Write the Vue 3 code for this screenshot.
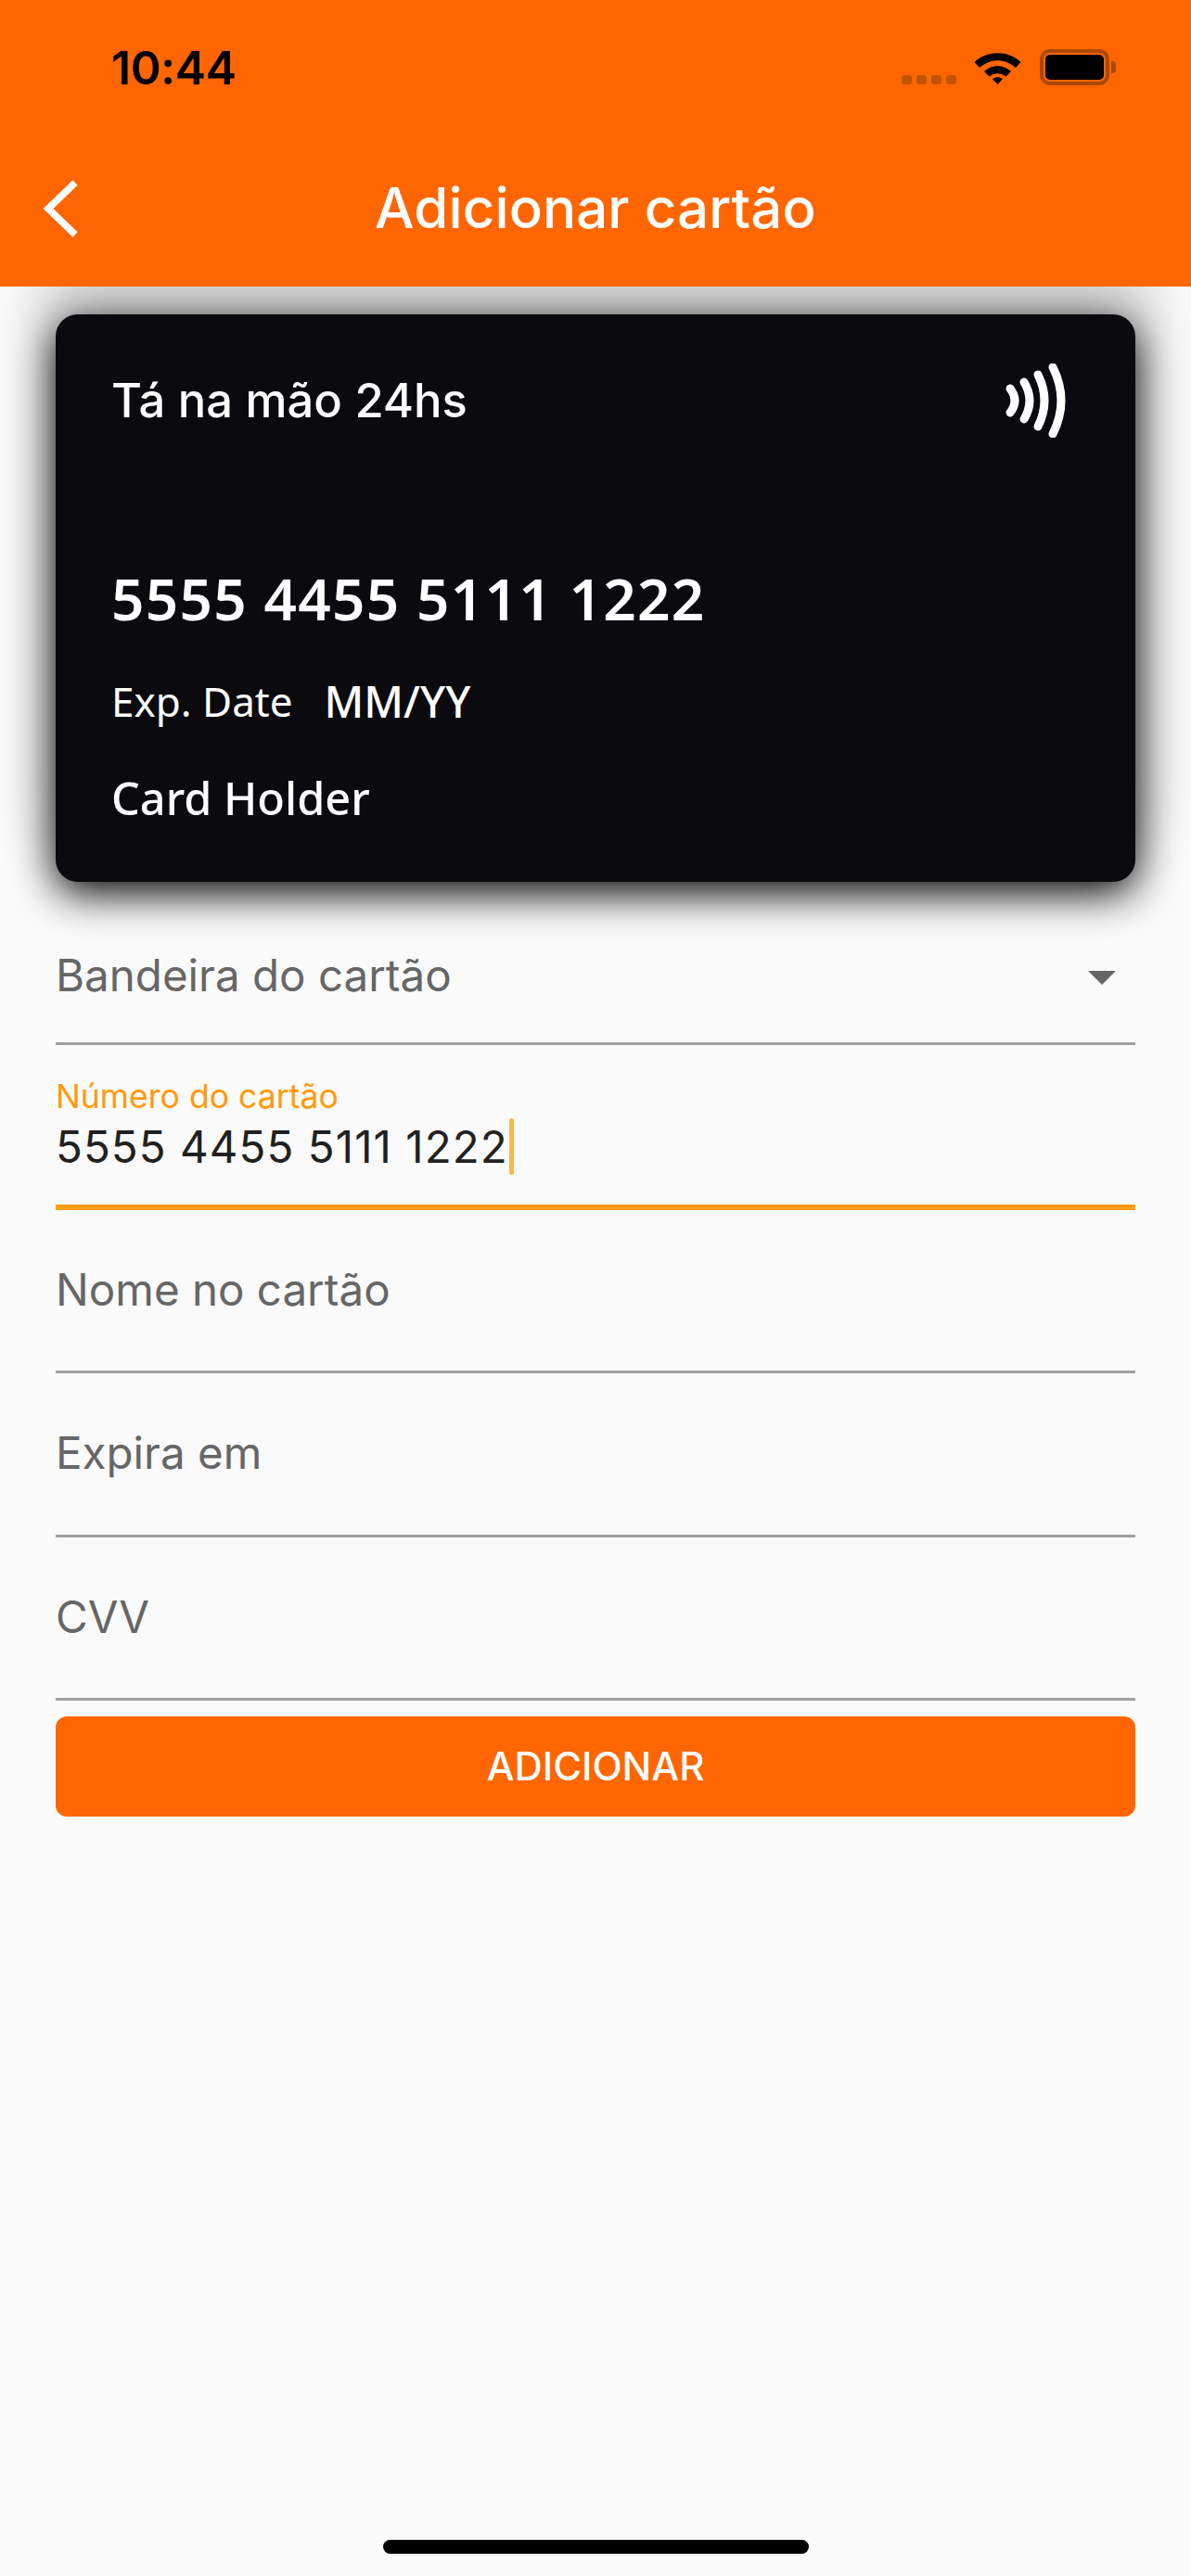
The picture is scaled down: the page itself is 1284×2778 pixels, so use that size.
<template>
  <div class="screen">
    <header class="appbar">
      <div class="status">
        <span class="time">10:44</span>
        <div class="status-icons">
          <div class="signal">
            <i v-for="n in 4" :key="n"></i>
          </div>
          <svg class="wifi" width="51" height="38" viewBox="0 0 51 38">
            <path d="M0.5 14 C14 1 37 1 50.5 14 L45 20 C33 9.5 18 9.5 6 20 Z" fill="#000" />
            <path d="M11 24 C20 16 31 16 40 24 L34.5 29.5 C29 25 22 25 16.5 29.5 Z" fill="#000" />
            <path d="M20 32 C23 29.5 28 29.5 31 32 L25.5 38 Z" fill="#000" />
          </svg>
          <div class="battery">
            <div class="battery-body"><div class="battery-fill"></div></div>
            <div class="battery-cap"></div>
          </div>
        </div>
      </div>
      <div class="toolbar">
        <svg class="back" width="38" height="62" viewBox="0 0 38 62">
          <path d="M35 3 L6 31 L35 59" fill="none" stroke="#fff" stroke-width="7.5" />
        </svg>
        <h1>Adicionar cartão</h1>
      </div>
    </header>

    <main class="content">
      <section class="card">
        <div class="card-top">
          <span class="card-name">Tá na mão 24hs</span>
          <svg class="nfc" width="66" height="80" viewBox="0 0 66 80">
            <g fill="none" stroke="#fff" stroke-width="9" stroke-linecap="round">
              <path d="M5 27 Q15 40 5 53" />
              <path d="M20 20 Q32 40 20 60" />
              <path d="M35 12 Q49 40 35 68" />
              <path d="M51 4 Q69 40 51 76" />
            </g>
          </svg>
        </div>
        <div class="card-number">5555 4455 5111 1222</div>
        <div class="card-exp">
          <span class="exp-label">Exp. Date</span>
          <span class="exp-value">MM/YY</span>
        </div>
        <div class="card-holder">Card Holder</div>
      </section>

      <form class="form" @submit.prevent>
        <div class="field select">
          <span class="placeholder">Bandeira do cartão</span>
          <svg class="caret" width="30" height="15" viewBox="0 0 30 15">
            <path d="M0 0 H30 L15 15 Z" fill="#666" />
          </svg>
        </div>
        <div class="field focused">
          <label>Número do cartão</label>
          <div class="value">5555 4455 5111 1222<span class="cursor"></span></div>
        </div>
        <div v-for="f in fields" :key="f" class="field plain">
          <span class="placeholder">{{ f }}</span>
        </div>
        <button type="button" class="submit">ADICIONAR</button>
      </form>
    </main>

    <div class="home-bar"></div>
  </div>
</template>

<script setup>
const fields = ['Nome no cartão', 'Expira em', 'CVV']
</script>

<style>
html, body { margin: 0; background: #fafafa; }
</style>

<style scoped>
.screen {
  position: relative;
  width: 1284px;
  height: 2778px;
  overflow: hidden;
  background: #fafafa;
  font-family: Inter, Roboto, "Liberation Sans", sans-serif;
}
.appbar {
  position: relative;
  z-index: 2;
  height: 309px;
  background: #ff6600;
}
.status {
  height: 143px;
  display: flex;
  justify-content: space-between;
  align-items: flex-start;
  padding: 0 81px 0 120px;
  box-sizing: border-box;
}
.time {
  margin-top: 45px;
  font-size: 50px;
  line-height: 56px;
  font-weight: 600;
  color: #000;
  letter-spacing: -0.4px;
}
.status-icons {
  display: flex;
  align-items: flex-start;
  margin-top: 53px;
}
.signal {
  display: flex;
  gap: 5px;
  margin-top: 28px;
  margin-right: 19px;
}
.signal i {
  width: 11px;
  height: 10px;
  border-radius: 3px;
  background: #c45200;
}
.wifi { display: block; margin-right: 20px; }
.battery { display: flex; align-items: center; }
.battery-body {
  width: 75px;
  height: 39px;
  box-sizing: border-box;
  border: 4px solid #ad4700;
  border-radius: 11px;
  padding: 2px;
}
.battery-fill {
  height: 100%;
  background: #000;
  border-radius: 5px;
}
.battery-cap {
  width: 5px;
  height: 13px;
  margin-left: 2px;
  background: #ad4700;
  border-radius: 0 4px 4px 0;
}
.toolbar {
  position: relative;
  height: 166px;
  display: flex;
  justify-content: center;
  padding-top: 46px;
  box-sizing: border-box;
}
.back { position: absolute; left: 46px; top: 51px; }
.toolbar h1 {
  margin: 0;
  font-size: 60px;
  line-height: 70px;
  font-weight: 500;
  letter-spacing: 0.1px;
  color: #fff;
}
.content { padding: 30px 60px 0; }
.card {
  height: 612px;
  box-sizing: border-box;
  padding: 53px 74px 0 60px;
  background: #0a0a0f;
  border-radius: 24px;
  box-shadow: 0 12px 46px rgba(0, 0, 0, 1), 0 -50px 60px 15px rgba(0, 0, 0, 0.16);
  color: #fff;
}
.card-top { display: flex; justify-content: space-between; align-items: flex-start; }
.card-name {
  margin-top: 8px;
  font-size: 50.7px;
  line-height: 64px;
  font-weight: 500;
}
.nfc { display: block; }
.card-number {
  margin-top: 135px;
  font-family: "Noto Sans", sans-serif;
  font-size: 62px;
  line-height: 76px;
  font-weight: 600;
  letter-spacing: 1.3px;
}
.card-exp {
  display: flex;
  align-items: center;
  gap: 34px;
  margin-top: 45px;
  font-family: "Noto Sans", sans-serif;
}
.exp-label { font-size: 44px; line-height: 56px; }
.exp-value { font-size: 46.6px; line-height: 56px; font-weight: 500; }
.card-holder {
  margin-top: 46px;
  font-family: "Noto Sans", sans-serif;
  font-size: 48.6px;
  line-height: 60px;
  font-weight: 500;
}
.form { display: flex; flex-direction: column; }
.field {
  box-sizing: border-box;
  border-bottom: 3px solid #a0a0a0;
}
.placeholder {
  font-size: 47.5px;
  line-height: 56px;
  color: #666;
}
.select {
  height: 176px;
  padding-top: 73px;
  display: flex;
  justify-content: space-between;
  align-items: flex-start;
}
.caret { margin: 23px 21px 0 0; }
.focused {
  height: 178px;
  padding-top: 35px;
  border-bottom: 6px solid #ff9d14;
}
.focused label {
  display: block;
  font-size: 35.6px;
  line-height: 42px;
  color: #ff9a0e;
}
.value {
  position: relative;
  display: inline-block;
  font-size: 47.5px;
  line-height: 56px;
  letter-spacing: 1.05px;
  color: #212121;
  margin-top: 5px;
}
.cursor {
  position: absolute;
  top: -3px;
  margin-left: 1px;
  width: 5px;
  height: 61px;
  border-radius: 3px;
  background: #ffb54d;
}
.plain {
  height: 176.4px;
  padding-top: 58px;
}
.submit {
  height: 108px;
  margin-top: 17px;
  border: 0;
  border-radius: 12px;
  background: #ff6600;
  color: #fff;
  font-family: inherit;
  font-size: 42px;
  font-weight: 500;
  padding: 0 0 2px;
}
.home-bar {
  position: absolute;
  left: 413px;
  bottom: 24px;
  width: 459px;
  height: 15px;
  border-radius: 8px;
  background: #000;
}
</style>
